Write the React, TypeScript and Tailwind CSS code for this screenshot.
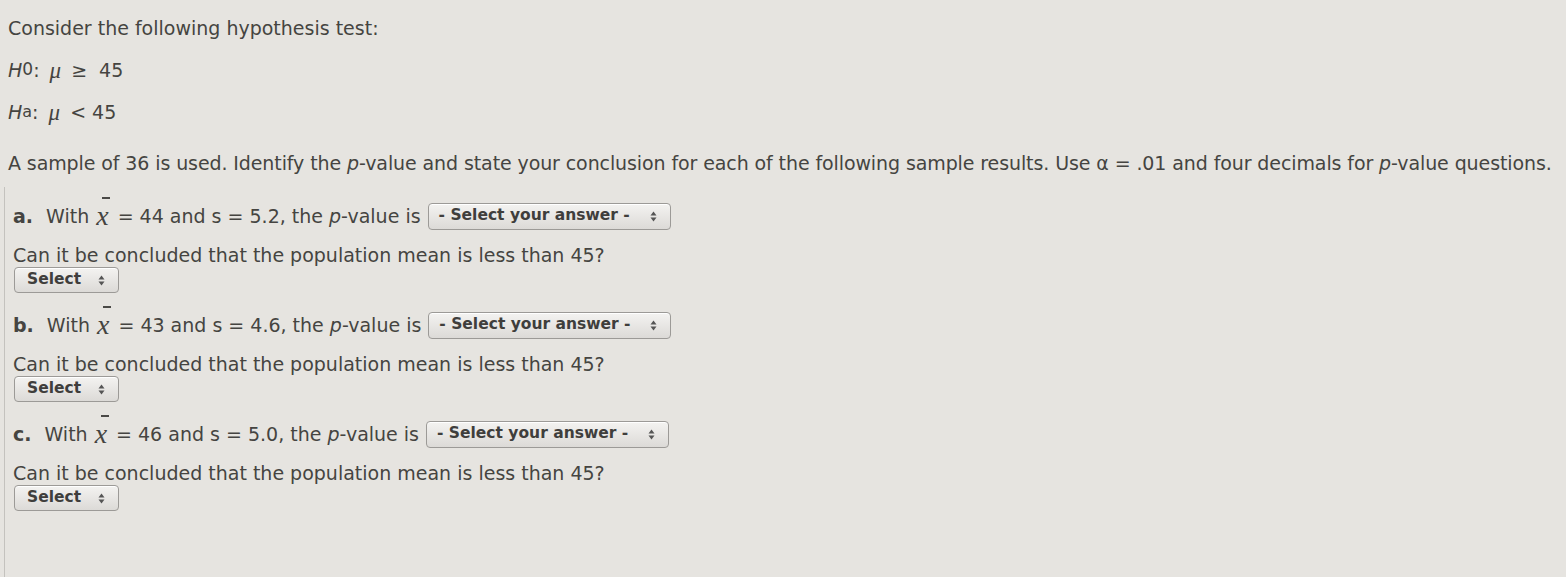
const font = { fontFamily: '"DejaVu Sans", Verdana, sans-serif' };

function Arrows() {
  return (
    <svg width="7" height="11" viewBox="0 0 7 11" className="shrink-0">
      <path d="M3.5 0.5 L6.5 4.5 L0.5 4.5 Z" fill="#555" />
      <path d="M3.5 10.5 L6.5 6.5 L0.5 6.5 Z" fill="#555" />
    </svg>
  );
}

function SelectBox({ label, wide }: { label: string; wide?: boolean }) {
  return (
    <div
      className={`flex items-center justify-between rounded-[4px] border border-[#9c9a97] bg-gradient-to-b from-[#f4f3f1] to-[#dcdad7] shadow-[inset_0_1px_0_#fff] ${
        wide ? "h-[27px] w-[243px] pl-[10px] pr-[13px]" : "h-[26px] w-[105px] pl-[12px] pr-[13px]"
      }`}
    >
      <span className="text-[15.5px] font-bold leading-none text-[#3f3e3c]">{label}</span>
      <Arrows />
    </div>
  );
}

function XBar() {
  return (
    <span className="relative ml-[7px] mr-[9px] inline-block leading-none">
      <span className="font-['Liberation_Serif'] text-[28px] italic leading-none">x</span>
      <span className="absolute left-[6px] top-[-5px] h-[1.5px] w-[8px] bg-[#4a4946]" />
    </span>
  );
}

function Part({ letter, mean, s }: { letter: string; mean: string; s: string }) {
  return (
    <div className="flex h-[28px] items-center whitespace-pre">
      <span className="font-bold">{letter}.</span>
      <span className="ml-[13px]">With</span>
      <XBar />
      <span>= {mean} and s = {s}, the </span>
      <span className="italic">p</span>
      <span>-value is</span>
      <span className="ml-[7px]">
        <SelectBox label="- Select your answer -" wide />
      </span>
    </div>
  );
}

function Conclude() {
  return (
    <>
      <p className="mt-[13px] leading-[24px]">Can it be concluded that the population mean is less than 45?</p>
      <div className="flex pl-[1px]">
        <SelectBox label="Select" />
      </div>
    </>
  );
}

function Mu() {
  return <span className="mx-[4px] font-['Liberation_Serif'] text-[23px] italic leading-none">μ</span>;
}

export default function App() {
  return (
    <div
      style={font}
      className="flex h-[577px] w-[1566px] flex-col overflow-hidden bg-[#e6e4e0] text-[19px] text-[#454441]"
    >
      <div className="pl-[8px] pt-[16px]">
        <p className="leading-[24px]">Consider the following hypothesis test:</p>
        <p className="mt-[18px] flex h-[24px] items-center whitespace-pre">
          <span className="italic">H</span>
          <span className="text-[17px]">0</span>
          <span>: </span>
          <Mu />
          <span className="mx-[6px]">≥</span>
          <span> 45</span>
        </p>
        <p className="mt-[18px] flex h-[24px] items-center whitespace-pre">
          <span className="italic">H</span>
          <span className="text-[16px]">a</span>
          <span>: </span>
          <Mu />
          <span> &lt; 45</span>
        </p>
        <p className="mt-[27px] h-[24px] whitespace-nowrap leading-[24px] tracking-[-0.1px]">
          A sample of 36 is used. Identify the <span className="italic">p</span>-value and state your conclusion for each of the
          following sample results. Use <span className="leading-none">α</span> = .01 and four decimals for{" "}
          <span className="italic">p</span>-value questions.
        </p>
      </div>
      <div className="ml-[4px] mt-[12px] flex-1 border-l border-[#c4c2be] pl-[8px] pt-[15px]">
        <Part letter="a" mean="44" s="5.2" />
        <Conclude />
        <div className="mt-[18px]">
          <Part letter="b" mean="43" s="4.6" />
        </div>
        <Conclude />
        <div className="mt-[18px]">
          <Part letter="c" mean="46" s="5.0" />
        </div>
        <Conclude />
      </div>
    </div>
  );
}
